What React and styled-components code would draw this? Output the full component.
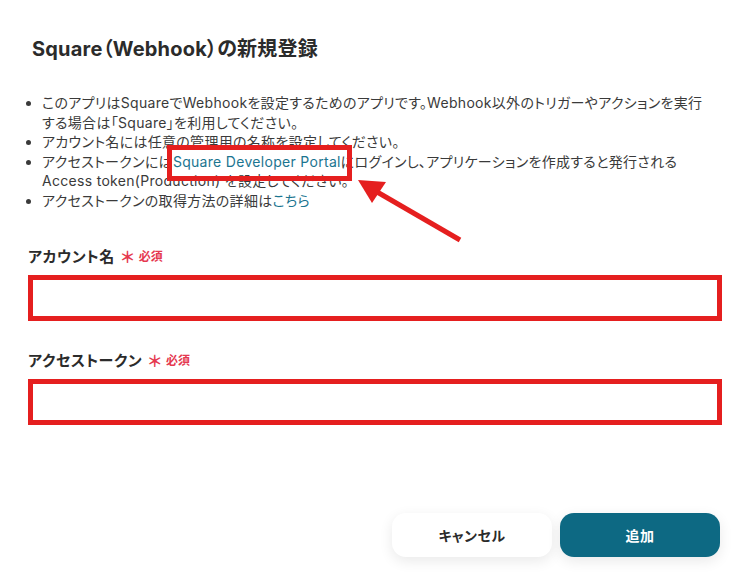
import React from "react";
import styled, { createGlobalStyle } from "styled-components";

const Global = createGlobalStyle`
  html, body { margin: 0; padding: 0; background: #fff; }
  body {
    font-family: "Inter", "Noto Sans CJK JP", sans-serif;
    color: #333;
    font-feature-settings: "palt";
  }
  * { box-sizing: border-box; }
`;

const Page = styled.div`
  position: relative;
  width: 748px;
  height: 588px;
  padding: 35px 27px 0 28px;
  display: flex;
  flex-direction: column;
`;

const Title = styled.h1`
  margin: 0 0 0 4px;
  font-size: 20px;
  line-height: 28px;
  font-weight: 700;
  letter-spacing: 0.2px;
  color: #2b2b2b;
`;

const Notes = styled.ul`
  margin: 30px 12px 0 0;
  padding-left: 14px;
  font-size: 14px;
  line-height: 19.5px;
  letter-spacing: 0.3px;
  color: #3a3a3a;
`;

const Link = styled.span`
  color: #1b7590;
`;

const Field = styled.div`
  display: flex;
  flex-direction: column;
  gap: 8px;
  margin-top: ${(p) => p.$top}px;
`;

const Label = styled.label`
  display: flex;
  align-items: center;
  gap: 4px;
  font-size: 15px;
  line-height: 20px;
  font-weight: 700;
  letter-spacing: 0.6px;
  color: #2b2b2b;
`;

const Star = styled.span`
  color: #e5384f;
  font-size: 16px;
  font-weight: 700;
  margin-left: 2px;
`;

const Req = styled.span`
  color: #e5384f;
  font-size: 12px;
  font-weight: 700;
  letter-spacing: 0;
`;

const Input = styled.div`
  width: 694px;
  height: 46px;
  border: 5px solid #e51f1f;
  background: #fff;
`;

const Footer = styled.div`
  display: flex;
  justify-content: flex-end;
  gap: 8px;
  margin-top: 88px;
  padding-right: 1px;
`;

const Button = styled.button`
  width: 160px;
  height: 44px;
  border: none;
  border-radius: 14px;
  font-family: inherit;
  font-feature-settings: "palt";
  font-size: 14px;
  font-weight: 700;
  letter-spacing: 0.5px;
  background: ${(p) => (p.$primary ? "#0d6983" : "#fff")};
  color: ${(p) => (p.$primary ? "#fff" : "#2b2b2b")};
  box-shadow: 0 4px 14px rgba(0, 0, 0, 0.09);
`;

const Highlight = styled.div`
  position: absolute;
  left: 167px;
  top: 145px;
  width: 185px;
  height: 36px;
  border: 5px solid #e51f1f;
`;

const Arrow = styled.svg`
  position: absolute;
  left: 0;
  top: 0;
  pointer-events: none;
`;

export default function App() {
  return (
    <>
      <Global />
      <Page>
        <Title>Square（Webhook）の新規登録</Title>
        <Notes>
          <li>
            このアプリはSquareでWebhookを設定するためのアプリです。Webhook以外のトリガーやアクションを実行する場合は「Square」を利用してください。
          </li>
          <li>アカウント名には任意の管理用の名称を設定してください。</li>
          <li>
            アクセストークンには<Link>Square Developer Portal</Link>
            にログインし、アプリケーションを作成すると発行されるAccess token(Production) を設定してください。
          </li>
          <li>
            アクセストークンの取得方法の詳細は<Link>こちら</Link>
          </li>
        </Notes>
        <Field $top={37}>
          <Label>
            アカウント名<Star>＊</Star>
            <Req>必須</Req>
          </Label>
          <Input />
        </Field>
        <Field $top={30}>
          <Label>
            アクセストークン<Star>＊</Star>
            <Req>必須</Req>
          </Label>
          <Input />
        </Field>
        <Footer>
          <Button>キャンセル</Button>
          <Button $primary>追加</Button>
        </Footer>
        <Highlight />
        <Arrow width="748" height="588" viewBox="0 0 748 588">
          <line x1="460" y1="240" x2="372" y2="189" stroke="#e51f1f" strokeWidth="5" />
          <polygon points="358,180 386,182 372,203" fill="#e51f1f" />
        </Arrow>
      </Page>
    </>
  );
}
